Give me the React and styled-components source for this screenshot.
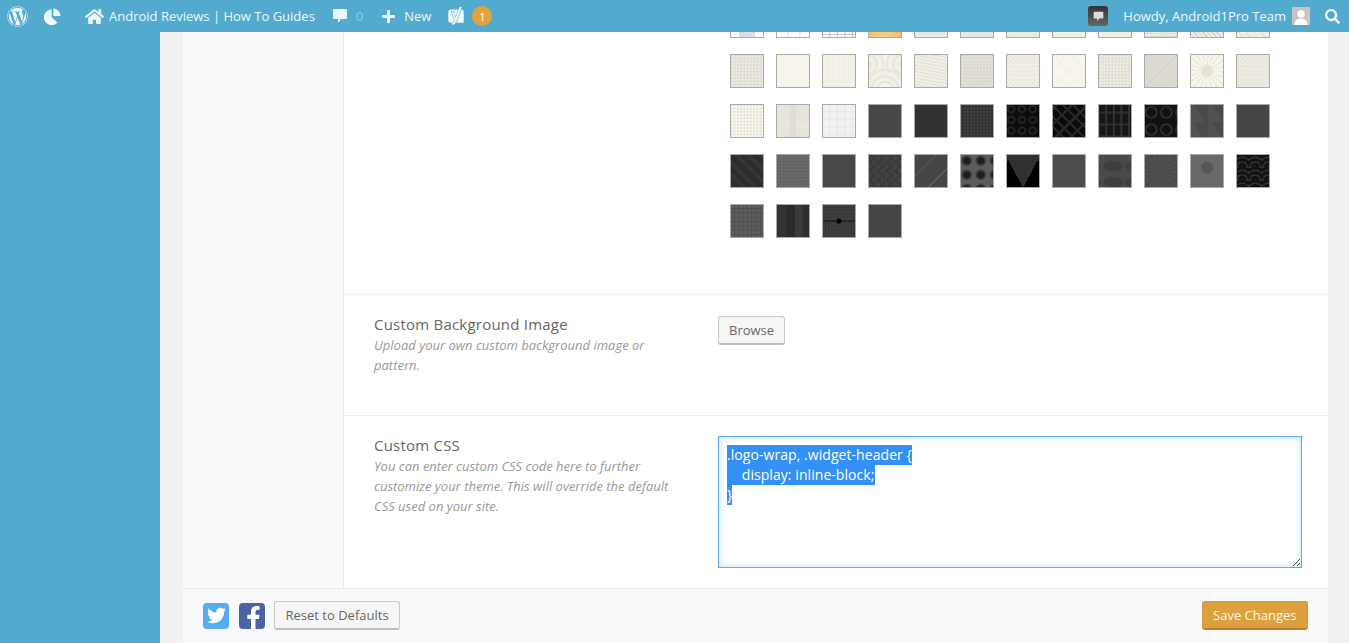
import React from 'react';
import styled, { createGlobalStyle } from 'styled-components';
import { FaWordpress, FaHome, FaPlus, FaSearch, FaTwitter, FaFacebookF } from 'react-icons/fa';
import { SiYoast } from 'react-icons/si';

const Global = createGlobalStyle`
  html, body { margin: 0; padding: 0; height: 100%; overflow: hidden; }
  body { font-family: "Open Sans", "Liberation Sans", sans-serif; background: #f1f1f1; }
  * { box-sizing: border-box; }
`;

const Page = styled.div`
  width: 1349px; height: 643px; display: flex; flex-direction: column; overflow: hidden;
`;
const TopBar = styled.header`
  height: 32px; flex: none; background: #52abcf; color: #e9f5fa; display: flex;
  justify-content: space-between; align-items: center; font-size: 13px; position: relative; z-index: 2;
`;
const BarGroup = styled.div`
  display: flex; align-items: center; height: 100%;
`;
const BarItem = styled.span`
  display: flex; align-items: center; margin-left: ${p => p.$ml || 0}px; color: ${p => p.$dim ? '#8fcbe3' : '#ecf7fb'};
  white-space: nowrap; line-height: 32px;
`;
const Badge = styled.span`
  width: 20px; height: 20px; border-radius: 50%; background: #e3a33d; color: #fff; font-size: 11px;
  display: flex; align-items: center; justify-content: center; margin-left: ${p => p.$ml}px;
`;
const NoteIcon = styled.span`
  width: 20px; height: 20px; border-radius: 3px; background: linear-gradient(#333, #666); margin-left: 1px;
  display: flex; align-items: center; justify-content: center;
`;
const Body = styled.div`
  flex: 1; display: flex; min-height: 0;
`;
const Sidebar = styled.aside`
  width: 160px; flex: none; background: #52abcf;
`;
const Main = styled.main`
  flex: 1; background: #f1f1f1; padding: 0 21px 0 23px; overflow: hidden;
`;
const Panel = styled.div`
  background: #fff; display: flex; flex-direction: column; height: 100%; overflow: hidden;
`;
const Columns = styled.div`
  flex: 1; display: flex; min-height: 0;
`;
const TabColumn = styled.div`
  width: 161px; flex: none; background: #f9fafc; border-right: 1px solid #e9e9e9;
`;
const Sections = styled.div`
  flex: 1; min-width: 0; margin-top: -28px;
`;
const Section = styled.section`
  display: flex; height: ${p => p.$h}; padding-top: ${p => p.$top}px; border-bottom: ${p => p.$last ? 'none' : '1px solid #ececec'};
`;
const Label = styled.div`
  width: 374px; flex: none; padding: 0 30px; margin-top: ${p => p.$shift || 0}px;
`;
const Title = styled.div`
  font-size: 15px; line-height: 20px; color: #666; letter-spacing: 0.22px;
`;
const Desc = styled.div`
  font-size: 13px; line-height: 20px; font-style: italic; color: #999; margin-top: ${p => p.$mt}px;
`;
const Grid = styled.div`
  display: grid; grid-template-columns: repeat(12, 34px); column-gap: 12px; row-gap: 16px; margin-left: 12px; align-content: start;
`;
const Swatch = styled.div`
  width: 34px; height: 34px; border: 1px solid #aaa9a6; overflow: hidden;
  &::before {
    content: ''; display: block; width: 100%; height: 100%; background: ${p => p.$bg};
    filter: blur(0.7px); transform: scale(1.08);
  }
`;
const Button = styled.button`
  font-family: inherit; font-size: 13px; height: 29px; padding: 0 ${p => p.$px || 10.5}px; border: 1px solid #c9c9c9;
  border-bottom: 2px solid #bdbdbd; border-radius: 3px; background: #f6f6f6; color: #666; line-height: 26px; cursor: pointer;
  white-space: nowrap;
`;
const Field = styled.div`
  position: relative; width: 584px; height: 132px; border: 1px solid #55aee8; box-shadow: inset 0 0 6px rgba(80,170,235,.4);
  background: #fff; padding: 8px; font-size: 14px; line-height: 20px; white-space: pre; color: #555; letter-spacing: 0.06px;
`;
const CodeLine = styled.div`
  height: 20px; display: block;
`;
const Selected = styled.span`
  background: #3390f5; color: #fff; display: inline-block; height: 20px;
`;
const Grip = styled.svg`
  position: absolute; right: 0; bottom: 0; width: 11px; height: 11px;
`;
const Footer = styled.footer`
  height: 55px; flex: none; background: #f8f9fb; border-top: 1px solid #e9e9e9; padding: 12px 20px 0 20px;
  display: flex; justify-content: space-between; align-items: flex-start;
`;
const FooterLeft = styled.div`
  display: flex; align-items: center;
`;
const Social = styled.span`
  width: 26px; height: 26px; border-radius: 4px; background: ${p => p.$c}; color: #fff; display: flex;
  align-items: ${p => p.$end ? 'flex-end' : 'center'}; justify-content: ${p => p.$end ? 'flex-end' : 'center'}; margin-right: ${p => p.$mr}px;
  overflow: hidden;
`;
const SaveButton = styled(Button)`
  background: #dca03f; border-color: #d2983a; border-bottom-color: #b98227; color: #fdf6e6;
`;

/* pattern helpers for the swatch textures */
const dots = (base, ink, s = 3) => `radial-gradient(${ink} 0.7px, transparent 1px) 0 0 / ${s}px ${s}px, ${base}`;
const fine = (base, ink, s = 6) =>
  `linear-gradient(${ink} 1px, transparent 1px) 0 0 / ${s}px ${s}px, linear-gradient(90deg, ${ink} 1px, transparent 1px) 0 0 / ${s}px ${s}px, ${base}`;
const check = (base, ink, s = 4) =>
  `repeating-conic-gradient(${ink} 0 25%, transparent 0 50%) 0 0 / ${s}px ${s}px, ${base}`;
const hatch = (base, ink, a = 45, s = 3) =>
  `repeating-linear-gradient(${a}deg, ${ink} 0 1px, transparent 1px ${s}px), ${base}`;
const rings = (base, ink, s = 16) =>
  `repeating-radial-gradient(circle at 50% 100%, ${ink} 0 1px, transparent 1px 4px) 0 0 / ${s}px ${s}px, ${base}`;
const weave = (base, ink) =>
  `repeating-linear-gradient(45deg, ${ink} 0 2px, transparent 2px 7px), repeating-linear-gradient(-45deg, ${ink} 0 2px, transparent 2px 10px), ${base}`;
const scallop = 'radial-gradient(circle at 50% 105%, #f8f5ed 0 6px, #e8e5da 7px 8px, #f4f1e8 9px 11px, #e8e5da 12px 13px, #f2efe6 14px 17px, #e8e5da 18px 19px, transparent 20px), ' +
  'radial-gradient(circle at 0 30%, #e9e6dc 0 3px, #f3f0e7 4px 7px, #e9e6dc 8px 9px, #f3f0e7 10px 13px, #e9e6dc 14px 15px, transparent 16px), ' +
  'radial-gradient(circle at 100% 30%, #e9e6dc 0 3px, #f3f0e7 4px 7px, #e9e6dc 8px 9px, #f3f0e7 10px 13px, #e9e6dc 14px 15px, transparent 16px), #f7f4eb';

const swatches = [
  'linear-gradient(90deg, #fff 26%, #d8dee3 26% 74%, #fff 74%)',
  fine('#fff', '#d4d8dc', 11),
  fine('#fff', '#b9bcc0', 7),
  'linear-gradient(90deg, #f1c26f, #f4cd86 50%, #efbf6b)',
  check('#eef0f2', '#dfe3e7', 4),
  '#e4e7e9',
  '#ecebe5', '#f0eee6', '#f2f0e9', fine('#f0eee6', '#dcd9d0', 3), hatch('#f2efe8', '#d5d2c9'), hatch('#f1eee6', '#e3e0d7', 45, 5),

  dots('#e9e7df', '#d8d5cb', 3),
  '#f7f4eb',
  fine('#f5f2ea', '#efece3', 5),
  scallop,
  hatch('#f1eee6', '#e4e1d7', 10, 3),
  dots('#e2dfd7', '#d6d3ca', 3),
  check('#f3f0e8', '#e9e6dc', 4),
  'linear-gradient(45deg, transparent 48%, #efece2 49% 51%, transparent 52%) 0 0 / 16px 16px, linear-gradient(-45deg, transparent 48%, #efece2 49% 51%, transparent 52%) 0 0 / 16px 16px, #f8f5ec',
  dots('#ece9e0', '#d8d5cb', 3),
  'linear-gradient(45deg, transparent 48%, #d5d2ca 50%, transparent 52%), linear-gradient(-45deg, transparent 48%, #d5d2ca 50%, transparent 52%), #dcdad2',
  'radial-gradient(circle, #e4e1d7 0 5px, transparent 6px), repeating-conic-gradient(#ebe8de 0 6deg, #f8f5ec 6deg 18deg)',
  check('#efece3', '#e6e3d9', 4),

  dots('#f7f4eb', '#dedace', 3),
  'linear-gradient(90deg, transparent 40%, #e0ddd3 40% 60%, transparent 60%), linear-gradient(transparent 55%, #e9e6dd 55% 70%, transparent 70%), #e7e4db',
  fine('#f1f2f3', '#e5e7e9', 7),
  '#474747',
  '#323232',
  dots('#333', '#474747', 3),
  'radial-gradient(circle, transparent 2px, #2a2a2a 2.5px 3.5px, transparent 4px) 0 0 / 10px 10px, #0c0c0c',
  weave('#0a0a0a', '#272727'),
  'linear-gradient(90deg, #333 0 2px, transparent 2px) 0 0 / 7px 11px, linear-gradient(#161616 0 7px, #2e2e2e 7px 9px, #161616 9px) 0 0 / 11px 11px, #161616',
  'radial-gradient(circle, transparent 4px, #333 4.5px 5.5px, transparent 6px) 0 0 / 14px 16px, #111',
  'linear-gradient(60deg, #525252 0 50%, #4a4a4a 50%) 0 0 / 17px 17px',
  '#454545',

  'repeating-linear-gradient(45deg, #343434 0 4px, #2c2c2c 4px 8px)',
  dots('#6a6a6a', '#5e5e5e', 3),
  '#484848',
  'linear-gradient(135deg, transparent 50%, #383838 50% 70%, transparent 70%) 0 0 / 8px 8px, linear-gradient(45deg, transparent 50%, #383838 50% 70%, transparent 70%) 0 0 / 8px 8px, #434343',
  'repeating-linear-gradient(135deg, #454545 0 15px, #5e5e5e 15px 16px)',
  'radial-gradient(circle, #1d1d1d 0 3px, #3a3a3a 3.5px 4.5px, transparent 5px) 0 0 / 13px 13px, #5c5c5c',
  'conic-gradient(from 333deg at 50% 100%, #313131 0 54deg, transparent 54deg), linear-gradient(#2c2c2c 0 22%, #000 22%)',
  '#4d4d4d',
  'radial-gradient(ellipse 9px 5px, #3e3e3e 0 100%, transparent 100%) 4px 4px / 20px 15px, #4a4a4a',
  'repeating-conic-gradient(#4a4a4a 0 10deg, #4f4f4f 10deg 20deg)',
  'radial-gradient(circle at 50% 40%, #565656 0 5px, transparent 6px), #696969',
  rings('#111', '#3c3c3c', 12),

  fine('#5d5d5d', '#4d4d4d', 4),
  'linear-gradient(90deg, #333 0 30%, #2a2a2a 30% 55%, #393939 55% 80%, #2d2d2d 80%)',
  'radial-gradient(circle, #000 0 2px, transparent 2.5px), linear-gradient(transparent 48%, #262626 48% 54%, transparent 54%), ' + fine('#404040', '#363636', 3),
  '#444',
];

const CommentGlyph = ({ size = 16, fill = '#ecf7fb' }) => (
  <svg width={size} height={size} viewBox="0 0 16 16">
    <path fill={fill} d="M2 1h12a1 1 0 0 1 1 1v8a1 1 0 0 1-1 1H9l-3 4v-4H2a1 1 0 0 1-1-1V2a1 1 0 0 1 1-1z" />
  </svg>
);
const PieGlyph = () => (
  <svg width="17" height="17" viewBox="0 0 17 17">
    <path fill="#ecf7fb" d="M7.6 1.5v7.8l5.9 5.2A7.8 7.8 0 1 1 7.6 1.5z" />
    <path fill="#ecf7fb" d="M9.4.6a7.4 7.4 0 0 1 7.2 7.3H9.4z" />
  </svg>
);
const Avatar = () => (
  <svg width="18" height="18" viewBox="0 0 18 18">
    <rect width="18" height="18" fill="#c9c4bf" />
    <circle cx="9" cy="7" r="3.7" fill="#fff" />
    <path fill="#fff" d="M2.5 18c0-4.5 3-6.5 6.5-6.5s6.5 2 6.5 6.5z" />
  </svg>
);

export default function App() {
  return (
    <Page>
      <Global />
      <TopBar>
        <BarGroup>
          <BarItem $ml={7}><FaWordpress size={21} /></BarItem>
          <BarItem $ml={16}><PieGlyph /></BarItem>
          <BarItem $ml={24}><FaHome size={19} /></BarItem>
          <BarItem $ml={5}>Android Reviews | How To Guides</BarItem>
          <BarItem $ml={17}><CommentGlyph /></BarItem>
          <BarItem $ml={8} $dim>0</BarItem>
          <BarItem $ml={18}><FaPlus size={15} /></BarItem>
          <BarItem $ml={8}>New</BarItem>
          <BarItem $ml={16}><SiYoast size={18} /></BarItem>
          <Badge $ml={7}>1</Badge>
        </BarGroup>
        <BarGroup>
          <NoteIcon><CommentGlyph size={11} fill="#ddd" /></NoteIcon>
          <BarItem $ml={15}>Howdy, Android1Pro Team</BarItem>
          <BarItem $ml={6}><Avatar /></BarItem>
          <BarItem $ml={15}><FaSearch size={15} /></BarItem>
          <BarItem $ml={9} />
        </BarGroup>
      </TopBar>
      <Body>
        <Sidebar />
        <Main>
          <Panel>
            <Columns>
              <TabColumn />
              <Sections>
                <Section $h="291px" $top={0}>
                  <Label />
                  <Grid>
                    {swatches.map((bg, i) => <Swatch key={i} $bg={bg} />)}
                  </Grid>
                </Section>
                <Section $h="121px" $top={21}>
                  <Label $shift={-2}>
                    <Title>Custom Background Image</Title>
                    <Desc $mt={1}>Upload your own custom background image or pattern.</Desc>
                  </Label>
                  <Button $px={10}>Browse</Button>
                </Section>
                <Section $top={20} $last>
                  <Label $shift={-1}>
                    <Title>Custom CSS</Title>
                    <Desc $mt={1}>You can enter custom CSS code here to further customize your theme. This will override the default CSS used on your site.</Desc>
                  </Label>
                  <Field>
                    <CodeLine><Selected>.logo-wrap, .widget-header {'{'}</Selected></CodeLine>
                    <CodeLine><Selected>{'    display: inline-block;'}</Selected></CodeLine>
                    <CodeLine><Selected>{'}'}</Selected></CodeLine>
                    <Grip viewBox="0 0 11 11">
                      <path d="M10 3L3 10M10 7L7 10" stroke="#555" strokeWidth="1" fill="none" />
                    </Grip>
                  </Field>
                </Section>
              </Sections>
            </Columns>
            <Footer>
              <FooterLeft>
                <Social $c="#55acee" $mr={10}><FaTwitter size={19} /></Social>
                <Social $c="#4b62a3" $mr={9} $end><FaFacebookF size={23} /></Social>
                <Button>Reset to Defaults</Button>
              </FooterLeft>
              <SaveButton>Save Changes</SaveButton>
            </Footer>
          </Panel>
        </Main>
      </Body>
    </Page>
  );
}
